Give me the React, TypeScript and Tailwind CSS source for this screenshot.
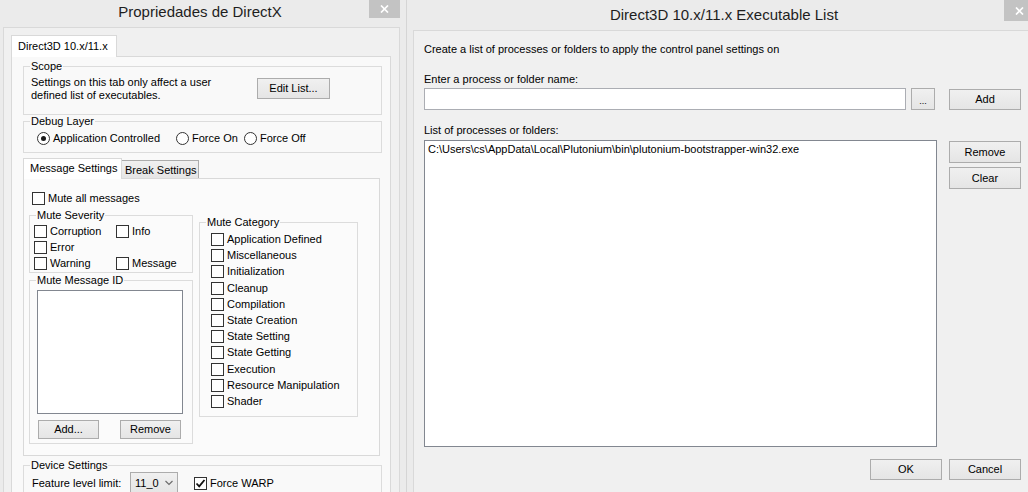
import { ReactNode } from "react";

// Win8-style dialog pair: "Propriedades de DirectX" + executable list

function CloseButton({ className }: { className: string }) {
  return (
    <div className={`flex items-center justify-center bg-[#c3c3c3] ${className}`}>
      <svg width="9" height="8" viewBox="0 0 9 8">
        <path d="M1 0.5 L8 7.5 M8 0.5 L1 7.5" stroke="white" strokeWidth="1.7" />
      </svg>
    </div>
  );
}

function Button({ children, className }: { children: ReactNode; className: string }) {
  return (
    <div
      className={`flex items-center justify-center border border-[#acacac] bg-linear-to-b from-[#f0f0f0] to-[#e5e5e5] text-black ${className}`}
    >
      {children}
    </div>
  );
}

function Checkbox({ label, checked }: { label: string; checked?: boolean }) {
  return (
    <div className="flex h-[13px] items-center gap-[3px] leading-[13px]">
      <span className="flex h-[13px] w-[13px] shrink-0 items-center justify-center border border-[#333333] bg-white">
        {checked && (
          <svg width="11" height="11" viewBox="0 0 11 11">
            <path d="M1.5 5.5 L4.2 8.3 L9.5 2" fill="none" stroke="#111" strokeWidth="1.8" />
          </svg>
        )}
      </span>
      <span className="whitespace-nowrap">{label}</span>
    </div>
  );
}

function Radio({ label, checked }: { label: string; checked?: boolean }) {
  return (
    <div className="flex h-[13px] items-center gap-[3px] leading-[13px]">
      <span className="flex h-[13px] w-[13px] shrink-0 items-center justify-center rounded-full border border-[#333333] bg-white">
        {checked && <span className="h-[5px] w-[5px] rounded-full bg-[#1a1a1a]" />}
      </span>
      <span className="whitespace-nowrap">{label}</span>
    </div>
  );
}

function GroupBox({
  label,
  className,
  children,
}: {
  label: string;
  className: string;
  children?: ReactNode;
}) {
  return (
    <fieldset className={`shrink-0 border border-[#dcdcdc] ${className}`}>
      <legend className="ml-[6px] px-[1px] leading-[13px]">{label}</legend>
      {children}
    </fieldset>
  );
}

const categories = [
  "Application Defined",
  "Miscellaneous",
  "Initialization",
  "Cleanup",
  "Compilation",
  "State Creation",
  "State Setting",
  "State Getting",
  "Execution",
  "Resource Manipulation",
  "Shader",
];

function DirectXProperties() {
  return (
    <div className="flex w-[400px] shrink-0 flex-col">
      <div className="relative flex h-[27px] shrink-0 items-center justify-center">
        <span className="-mt-[3px] text-[15px] text-[#1e1e1e]">Propriedades de DirectX</span>
        <CloseButton className="absolute right-0 top-0 h-[18px] w-[31px]" />
      </div>

      <div className="ml-[3px] min-h-0 flex-1 overflow-hidden border-l border-r border-t border-[#d9d9d9] bg-[#f0f0f0] pl-[7px] pt-[7px]">
        <div className="relative z-10 -mb-px h-[22px] w-[106px] border border-b-0 border-[#d9d9d9] bg-white pl-[6px] leading-[20px]">
          Direct3D 10.x/11.x
        </div>

        <div className="h-[450px] w-[380px] border border-[#d9d9d9] bg-[#f9f9f9] pl-[11px] pt-[3px]">
          {/* Scope */}
          <GroupBox label="Scope" className="h-[55px] w-[359px]">
            <div className="flex items-start pl-[7px]">
              <div className="w-[226px] pt-[3px] leading-[13px]">
                Settings on this tab only affect a user
                <br />
                defined list of executables.
              </div>
              <Button className="mt-[5px] h-[21px] w-[73px]">Edit List...</Button>
            </div>
          </GroupBox>

          {/* Debug layer */}
          <GroupBox label="Debug Layer" className="h-[38px] w-[359px]">
            <div className="flex pl-[13px] pt-[4px]">
              <div className="w-[139px]">
                <Radio label="Application Controlled" checked />
              </div>
              <div className="w-[68px]">
                <Radio label="Force On" />
              </div>
              <Radio label="Force Off" />
            </div>
          </GroupBox>

          {/* Inner tabs */}
          <div className="mt-[5px] flex items-end">
            <div className="relative z-10 -mb-px h-[21px] w-[99px] border border-b-0 border-[#d9d9d9] bg-white pl-[6px] leading-[19px]">
              Message Settings
            </div>
            <div className="h-[18px] w-[77px] border border-b-0 border-l-0 border-[#acacac] bg-linear-to-b from-[#f0f0f0] to-[#e5e5e5] pl-[3px] leading-[18px]">
              Break Settings
            </div>
          </div>

          <div className="h-[278px] w-[357px] border border-[#d9d9d9] bg-[#fbfbfb]">
            <div className="ml-[8px] mt-[13px]">
              <Checkbox label="Mute all messages" />
            </div>

            <div className="flex">
              <div className="ml-[5px] mt-[4px] flex w-[164px] flex-col">
                <GroupBox label="Mute Severity" className="h-[64px] w-[164px]">
                  <div className="grid grid-cols-[82px_1fr] gap-y-[3px] pl-[4px] pt-[3px]">
                    <Checkbox label="Corruption" />
                    <Checkbox label="Info" />
                    <Checkbox label="Error" />
                    <div />
                    <Checkbox label="Warning" />
                    <Checkbox label="Message" />
                  </div>
                </GroupBox>

                <GroupBox label="Mute Message ID" className="mt-[1px] h-[170px] w-[164px]">
                  <div className="ml-[7px] mt-[3px] h-[124px] w-[146px] border border-[#828790] bg-white" />
                  <div className="ml-[8px] mt-[6px] flex gap-[21px]">
                    <Button className="h-[19px] w-[61px]">Add...</Button>
                    <Button className="h-[19px] w-[61px]">Remove</Button>
                  </div>
                </GroupBox>
              </div>

              <GroupBox label="Mute Category" className="ml-[6px] mt-[11px] h-[201px] w-[159px]">
                <div className="flex flex-col gap-y-[3.2px] pl-[11px] pt-[4px]">
                  {categories.map((c) => (
                    <Checkbox key={c} label={c} />
                  ))}
                </div>
              </GroupBox>
            </div>
          </div>

          {/* Device settings */}
          <GroupBox label="Device Settings" className="mt-[3px] h-[45px] w-[359px]">
            <div className="flex h-[22px] items-center pl-[8px]">
              <span className="w-[98px]">Feature level limit:</span>
              <div className="flex h-[22px] w-[48px] items-center justify-between border border-[#acacac] bg-linear-to-b from-[#f0f0f0] to-[#e5e5e5] pl-[4px] pr-[4px]">
                <span>11_0</span>
                <svg width="8" height="6" viewBox="0 0 8 6">
                  <path d="M0.5 1 L4 4.5 L7.5 1" fill="none" stroke="#6d6d6d" strokeWidth="1.2" />
                </svg>
              </div>
              <div className="ml-[16px]">
                <Checkbox label="Force WARP" checked />
              </div>
            </div>
          </GroupBox>
        </div>
      </div>
    </div>
  );
}

function ExecutableList() {
  return (
    <div className="ml-[6px] flex w-[629px] shrink-0 flex-col border-l border-[#d5d5d5]">
      <div className="relative flex h-[30px] shrink-0 items-center justify-center pl-[6px]">
        <span className="text-[15px] text-[#1e1e1e]">Direct3D 10.x/11.x Executable List</span>
        <CloseButton className="absolute right-0 top-0 h-[21px] w-[31px]" />
      </div>

      <div className="ml-[6px] min-h-0 flex-1 overflow-hidden border-l border-t border-[#d9d9d9] bg-[#f0f0f0] pl-[10px] pt-[12px] leading-[13px]">
        <div>Create a list of processes or folders to apply the control panel settings on</div>

        <div className="mt-[17px]">Enter a process or folder name:</div>
        <div className="mt-[2px] flex items-end">
          <div className="h-[22px] w-[482px] border border-[#abadb3] bg-white" />
          <Button className="ml-[5px] h-[22px] w-[24px] items-end pb-[3px] text-[9px] leading-[9px]">...</Button>
          <Button className="ml-[14px] h-[21px] w-[72px]">Add</Button>
        </div>

        <div className="mt-[14px]">List of processes or folders:</div>
        <div className="flex items-start">
          <div className="mt-[3px] h-[307px] w-[513px] border border-[#828790] bg-white pl-[3px] pt-[2px]">
            {"C:\\Users\\cs\\AppData\\Local\\Plutonium\\bin\\plutonium-bootstrapper-win32.exe"}
          </div>
          <div className="ml-[12px] flex flex-col gap-[4px] pt-[4px]">
            <Button className="h-[22px] w-[72px]">Remove</Button>
            <Button className="h-[22px] w-[72px]">Clear</Button>
          </div>
        </div>

        <div className="ml-[446px] mt-[12px] flex gap-[7px]">
          <Button className="h-[21px] w-[72px]">OK</Button>
          <Button className="h-[21px] w-[72px]">Cancel</Button>
        </div>
      </div>
    </div>
  );
}

export default function App() {
  return (
    <div className="flex h-[492px] w-[1028px] overflow-hidden bg-[#ebebeb] font-['Liberation_Sans',Arial,sans-serif] text-[11px] text-black">
      <DirectXProperties />
      <ExecutableList />
    </div>
  );
}
